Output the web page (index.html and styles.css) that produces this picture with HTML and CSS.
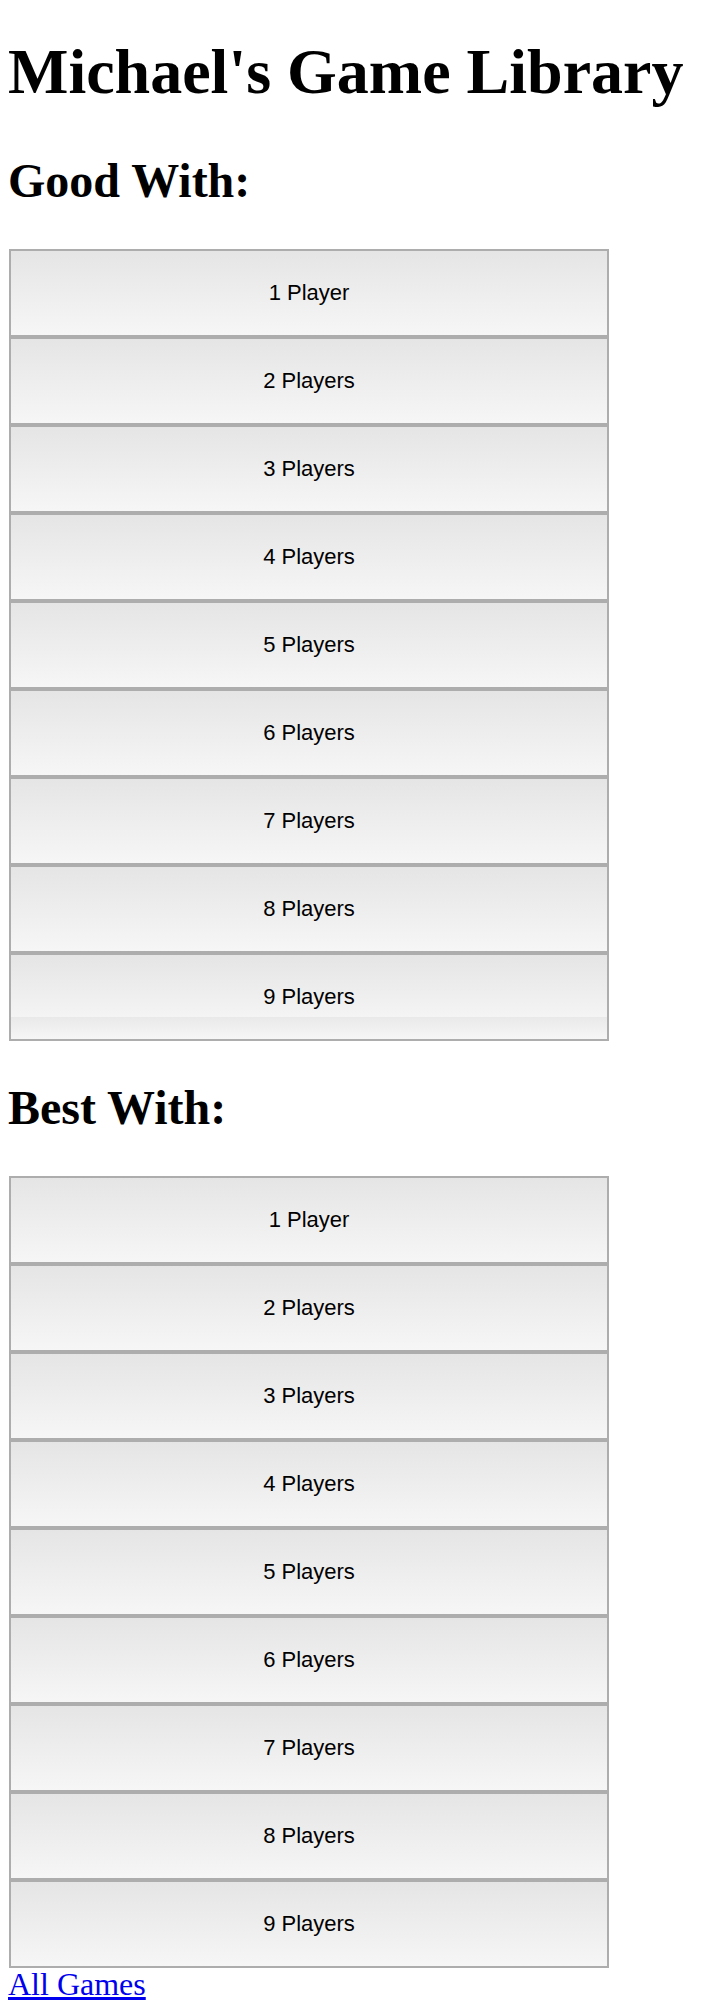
FILE: index.html
```html
<!DOCTYPE html>
<html>
<head>
<meta charset="utf-8">
<title>Michael's Game Library</title>
<link rel="stylesheet" href="styles.css">
</head>
<body>
<h1 class="title">Michael's Game Library</h1>
<h2 class="section-title section-good">Good With:</h2>
<ul class="player-list">
  <li class="player-item">1 Player</li>
  <li class="player-item">2 Players</li>
  <li class="player-item">3 Players</li>
  <li class="player-item">4 Players</li>
  <li class="player-item">5 Players</li>
  <li class="player-item">6 Players</li>
  <li class="player-item">7 Players</li>
  <li class="player-item">8 Players</li>
  <li class="player-item player-item-split">9 Players</li>
</ul>
<h2 class="section-title section-best">Best With:</h2>
<ul class="player-list">
  <li class="player-item">1 Player</li>
  <li class="player-item">2 Players</li>
  <li class="player-item">3 Players</li>
  <li class="player-item">4 Players</li>
  <li class="player-item">5 Players</li>
  <li class="player-item">6 Players</li>
  <li class="player-item">7 Players</li>
  <li class="player-item">8 Players</li>
  <li class="player-item">9 Players</li>
</ul>
<a class="all-games" href="#">All Games</a>
</body>
</html>
```
FILE: styles.css
```css
html {
  background: #ffffff;
}

body {
  margin: 0;
  padding: 0 8px;
  font-family: "Liberation Serif", "Times New Roman", serif;
  font-size: 32px;
  line-height: 32px;
  color: #000000;
}

.title {
  margin: 35px 0 0;
  font-size: 64px;
  line-height: 74px;
  font-weight: 700;
}

.section-title {
  margin: 0;
  font-size: 48px;
  line-height: 55px;
  font-weight: 700;
}

.section-good {
  margin-top: 44px;
}

.section-best {
  margin-top: 39px;
}

.player-list {
  list-style: none;
  margin: 41px 0 0 1px;
  padding: 0;
  width: 600px;
  display: flex;
  flex-direction: column;
}

.player-item {
  box-sizing: border-box;
  height: 88px;
  border: 2px solid #adadad;
  background: linear-gradient(to bottom, #e5e5e5 0%, #f6f6f6 100%);
  display: flex;
  align-items: center;
  justify-content: center;
  font-family: "Liberation Sans", Arial, Helvetica, sans-serif;
  font-size: 22px;
  line-height: 26px;
  color: #000000;
}

.player-item-split {
  background: linear-gradient(to bottom, #e5e5e5 0px, #f4f4f4 62px, #e9e9e9 62px, #f6f6f6 84px);
}

.all-games {
  display: inline-block;
  font-size: 32px;
  line-height: 32px;
  color: #0000ee;
  text-decoration: underline;
}
```
